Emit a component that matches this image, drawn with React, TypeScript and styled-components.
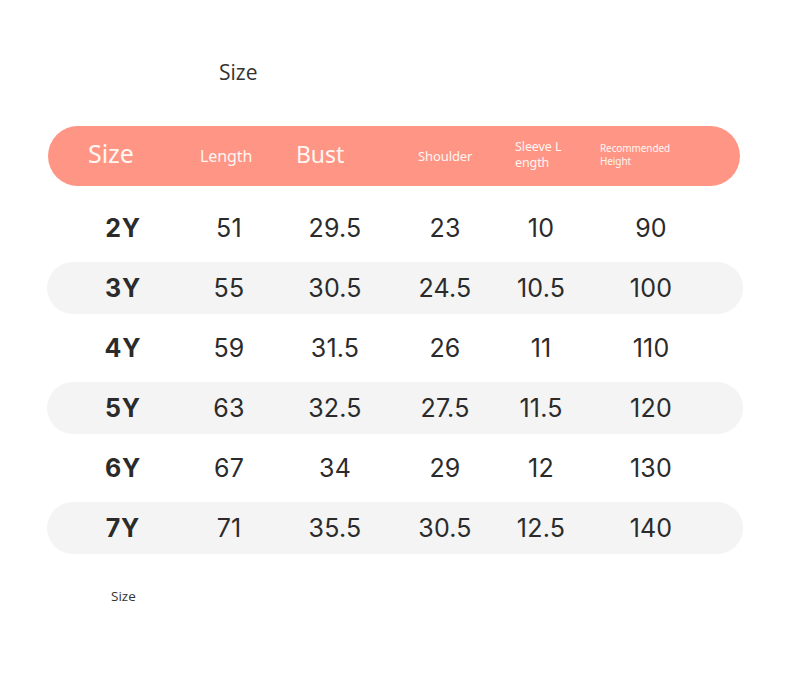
import React from "react";
import styled, { createGlobalStyle } from "styled-components";

const Global = createGlobalStyle`
  html, body { margin: 0; padding: 0; background: #ffffff; }
  body { font-family: "Open Sans", "Noto Sans", sans-serif; }
`;

const Page = styled.div`
  width: 790px;
  height: 685px;
  background: #ffffff;
  display: flex;
  flex-direction: column;
  box-sizing: border-box;
  padding-top: 59px;
`;

const Title = styled.div`
  margin-left: 219px;
  font-family: "Open Sans", sans-serif;
  font-size: 21px;
  line-height: 27px;
  color: #333333;
`;

const HeaderBar = styled.div`
  margin: 40px 0 0 48px;
  width: 692px;
  height: 60px;
  border-radius: 30px;
  background: #fe9585;
  box-sizing: border-box;
  padding-left: 40px;
  display: grid;
  grid-template-columns: 112px 96px 122px 97px 85px 1fr;
  align-items: center;
  color: #fff6f2;
  font-family: "Noto Sans", "Open Sans", sans-serif;
`;

const HeadCell = styled.div<{ $size: number; $lh?: number; $dy?: number }>`
  font-size: ${(p) => p.$size}px;
  line-height: ${(p) => p.$lh ?? Math.round(p.$size * 1.2)}px;
  transform: translateY(${(p) => p.$dy ?? 0}px);
  letter-spacing: -0.1px;
`;

const Rows = styled.div`
  margin: 12px 0 0 47px;
  width: 696px;
  display: flex;
  flex-direction: column;
`;

const Row = styled.div`
  height: 60px;
  padding: 4px 0;
  box-sizing: border-box;
`;

const Band = styled.div<{ $shaded: boolean }>`
  height: 52px;
  border-radius: 26px;
  background: ${(p) => (p.$shaded ? "#f4f4f4" : "transparent")};
  box-sizing: border-box;
  padding-left: 20px;
  display: grid;
  grid-template-columns: 112px 100px 112px 108px 84px 136px;
  align-items: center;
`;

const Cell = styled.div<{ $bold?: boolean }>`
  text-align: center;
  font-family: "Inter", "Lato", sans-serif;
  font-size: 25px;
  font-weight: ${(p) => (p.$bold ? 700 : 400)};
  color: #2b2b2b;
  letter-spacing: ${(p) => (p.$bold ? "0.8px" : "0.2px")};
`;

const Footnote = styled.div`
  margin: 29px 0 0 111px;
  font-family: "Open Sans", sans-serif;
  font-size: 13.5px;
  color: #333333;
`;

const data = [
  ["2Y", "51", "29.5", "23", "10", "90"],
  ["3Y", "55", "30.5", "24.5", "10.5", "100"],
  ["4Y", "59", "31.5", "26", "11", "110"],
  ["5Y", "63", "32.5", "27.5", "11.5", "120"],
  ["6Y", "67", "34", "29", "12", "130"],
  ["7Y", "71", "35.5", "30.5", "12.5", "140"],
];

export default function App() {
  return (
    <Page>
      <Global />
      <Title>Size</Title>
      <HeaderBar>
        <HeadCell $size={25} $dy={-3}>Size</HeadCell>
        <HeadCell $size={16}>Length</HeadCell>
        <HeadCell $size={23} $dy={-2}>Bust</HeadCell>
        <HeadCell $size={13}>Shoulder</HeadCell>
        <HeadCell $size={12.5} $lh={16} $dy={-1}>
          Sleeve L
          <br />
          ength
        </HeadCell>
        <HeadCell $size={10} $lh={13} $dy={-1}>
          Recommended
          <br />
          Height
        </HeadCell>
      </HeaderBar>
      <Rows>
        {data.map((r, i) => (
          <Row key={r[0]}>
            <Band $shaded={i % 2 === 1}>
              {r.map((v, j) => (
                <Cell key={j} $bold={j === 0}>
                  {v}
                </Cell>
              ))}
            </Band>
          </Row>
        ))}
      </Rows>
      <Footnote>Size</Footnote>
    </Page>
  );
}
